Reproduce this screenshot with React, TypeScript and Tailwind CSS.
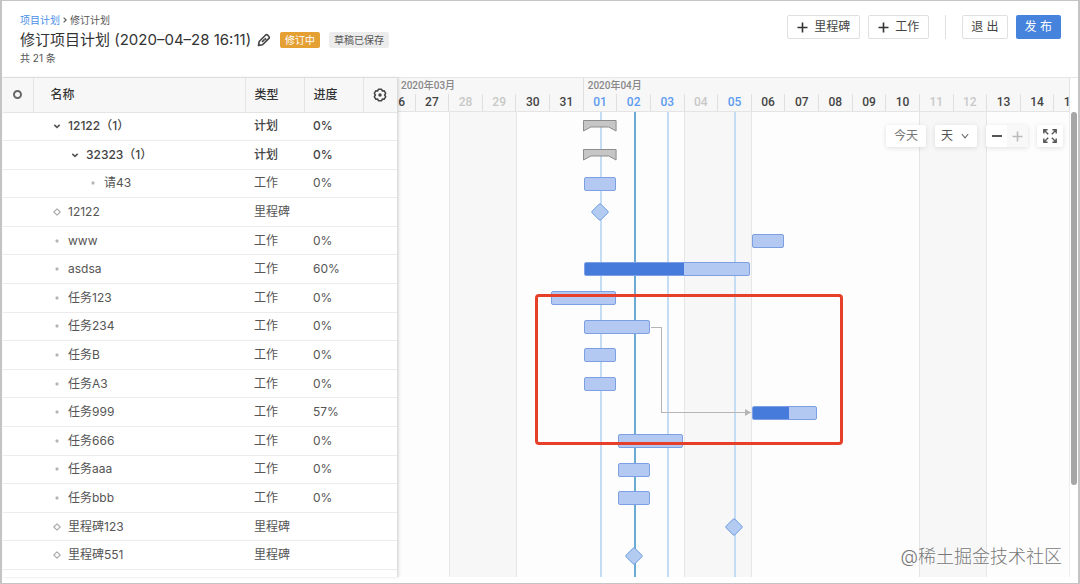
import React from 'react'

type TaskKind = 'plan' | 'work' | 'milestone'

interface Task {
  id: number
  name: string
  kind: TaskKind
  level: number
  progress?: number
  start?: number
  days?: number
}

interface Day {
  label: string
  tone: 'normal' | 'rest' | 'marked'
}

const KIND_LABEL: Record<TaskKind, string> = {
  plan: '计划',
  work: '工作',
  milestone: '里程碑',
}

// start is the zero-based day column, counted from 03-26
const TASKS: Task[] = [
  { id: 1, name: '12122（1）', kind: 'plan', level: 0, progress: 0, start: 6, days: 1 },
  { id: 2, name: '32323（1）', kind: 'plan', level: 1, progress: 0, start: 6, days: 1 },
  { id: 3, name: '请43', kind: 'work', level: 2, progress: 0, start: 6, days: 1 },
  { id: 4, name: '12122', kind: 'milestone', level: 0, start: 6, days: 1 },
  { id: 5, name: 'www', kind: 'work', level: 0, progress: 0, start: 11, days: 1 },
  { id: 6, name: 'asdsa', kind: 'work', level: 0, progress: 60, start: 6, days: 5 },
  { id: 7, name: '任务123', kind: 'work', level: 0, progress: 0, start: 5, days: 2 },
  { id: 8, name: '任务234', kind: 'work', level: 0, progress: 0, start: 6, days: 2 },
  { id: 9, name: '任务B', kind: 'work', level: 0, progress: 0, start: 6, days: 1 },
  { id: 10, name: '任务A3', kind: 'work', level: 0, progress: 0, start: 6, days: 1 },
  { id: 11, name: '任务999', kind: 'work', level: 0, progress: 57, start: 11, days: 2 },
  { id: 12, name: '任务666', kind: 'work', level: 0, progress: 0, start: 7, days: 2 },
  { id: 13, name: '任务aaa', kind: 'work', level: 0, progress: 0, start: 7, days: 1 },
  { id: 14, name: '任务bbb', kind: 'work', level: 0, progress: 0, start: 7, days: 1 },
  { id: 15, name: '里程碑123', kind: 'milestone', level: 0, start: 10, days: 1 },
  { id: 16, name: '里程碑551', kind: 'milestone', level: 0, start: 7, days: 1 },
]

const REST = ['28', '29', '04', '11', '12']
const MARKED = ['01', '02', '03', '05']

const DAYS: Day[] = [
  '26', '27', '28', '29', '30', '31',
  '01', '02', '03', '04', '05', '06', '07', '08', '09', '10', '11', '12', '13', '14', '15',
].map((label) => ({
  label,
  tone: REST.includes(label) ? 'rest' : MARKED.includes(label) ? 'marked' : 'normal',
}))

const TODAY = '02'

const DAY_TEXT: Record<Day['tone'], string> = {
  normal: 'text-[#444]',
  rest: 'text-[#c8c8c8]',
  marked: 'text-[#5b9bf0]',
}

const INDENT = ['pl-5', 'pl-[38px]', 'pl-[56px]']

function PencilIcon() {
  return (
    <svg className="size-[14px]" viewBox="0 0 14 14" fill="none" stroke="#444" strokeWidth="1.6" strokeLinejoin="round">
      <path d="M1.5 12.5l.7-4 6.2-6.2a1.7 1.7 0 0 1 2.4 0l.9.9a1.7 1.7 0 0 1 0 2.4l-6.2 6.2z" />
      <path d="M7.8 5.2l1.5 1.5M5 9l2.6-2.6" />
    </svg>
  )
}

function GearIcon() {
  return (
    <svg className="size-[14px]" viewBox="0 0 14 14" fill="none" stroke="#444" strokeWidth="1.5" strokeLinejoin="round">
      <path d="M5.4 1.2h3.2l.7 1.7 1.8-.2 1.6 2.7L11.6 7l1.1 1.6-1.6 2.7-1.8-.2-.7 1.7H5.4l-.7-1.7-1.8.2-1.6-2.7L2.4 7 1.3 5.4l1.6-2.7 1.8.2z" />
      <circle cx="7" cy="7" r="1.7" fill="#444" stroke="none" />
    </svg>
  )
}

function PlusIcon({ color }: { color: string }) {
  return (
    <svg className="size-[11px]" viewBox="0 0 11 11" stroke={color} strokeWidth="1.6">
      <path d="M5.5 0.5v10M0.5 5.5h10" />
    </svg>
  )
}

function ExpandIcon() {
  return (
    <svg className="size-[14px]" viewBox="0 0 14 14" fill="none" stroke="#555" strokeWidth="1.4">
      <path d="M.8 4.6V.8h3.8M.8.8l4.4 4.4M9.4.8h3.8v3.8M13.2.8L8.8 5.2M.8 9.4v3.8h3.8M.8 13.2l4.4-4.4M9.4 13.2h3.8V9.4M13.2 13.2L8.8 8.8" />
    </svg>
  )
}

function RowIcon({ kind }: { kind: TaskKind }) {
  if (kind === 'plan') {
    return (
      <svg className="size-2" viewBox="0 0 8 8" fill="none" stroke="#555" strokeWidth="1.6">
        <path d="M1.3 2.8L4 5.4l2.7-2.6" />
      </svg>
    )
  }
  if (kind === 'milestone') {
    return (
      <svg className="size-2" viewBox="0 0 8 8" fill="none" stroke="#aaa" strokeWidth="1.1" strokeLinejoin="round">
        <path d="M4 .8L7.2 4 4 7.2.8 4z" />
      </svg>
    )
  }
  return (
    <svg className="size-2" viewBox="0 0 8 8" fill="#b5b5b5">
      <rect x="2.6" y="2.6" width="2.8" height="2.8" rx=".6" />
    </svg>
  )
}

function PageHeader() {
  return (
    <header className="flex items-start justify-between border-b border-[#e6e6e6] pt-[11px] pr-[17px] pb-[13px] pl-[18px]">
      <div>
        <nav className="flex items-center gap-[3px] text-[10px] leading-4 text-[#555]">
          <a href="#plan" className="text-[#4a8fe8]">项目计划</a>
          <svg className="h-[6px] w-1" viewBox="0 0 4 6" fill="none" stroke="#555" strokeWidth="1.1">
            <path d="M.6.6L3.2 3 .6 5.4" />
          </svg>
          <span>修订计划</span>
        </nav>
        <div className="flex items-center text-[#333]">
          <h1 className="text-[15px] leading-6">修订项目计划 (2020–04–28 16:11)</h1>
          <button type="button" aria-label="编辑名称" className="ml-[6px]">
            <PencilIcon />
          </button>
          <span className="ml-[9px] rounded-xs bg-[#e5a033] px-[5px] text-[10px] leading-4 text-white">修订中</span>
          <span className="ml-[9px] rounded-xs bg-[#ececec] px-[5px] text-[10px] leading-4 text-[#555]">草稿已保存</span>
        </div>
        <p className="text-[10px] leading-3 text-[#555]">共 21 条</p>
      </div>
      <div className="flex items-center gap-2 pt-[3px] text-xs text-[#444]">
        <button type="button" className="flex h-6 items-center gap-[6px] rounded-xs border border-[#e0e0e0] px-[9px]">
          <PlusIcon color="#333" />
          里程碑
        </button>
        <button type="button" className="flex h-6 items-center gap-[6px] rounded-xs border border-[#e0e0e0] px-[9px]">
          <PlusIcon color="#333" />
          工作
        </button>
        <div className="mx-2 h-6 w-px bg-[#e0e0e0]" />
        <button type="button" className="h-6 rounded-xs border border-[#e0e0e0] px-2">退 出</button>
        <button type="button" className="h-6 rounded-xs bg-[#4583dc] px-[9px] text-white">发 布</button>
      </div>
    </header>
  )
}

function TaskTable() {
  return (
    <div className="relative z-10 w-[395px] shrink-0 overflow-hidden border-r border-[#dcdcdc] bg-white shadow-[1px_0_3px_rgba(0,0,0,0.12)]">
      <table className="h-[492px] w-full table-fixed border-collapse text-left text-xs text-[#555]">
        <colgroup>
          <col className="w-[30px]" />
          <col />
          <col className="w-[59px]" />
          <col className="w-[59px]" />
          <col className="w-[34px]" />
        </colgroup>
        <thead>
          <tr className="h-[34px] border-b border-[#e4e4e4] bg-[#f7f7f7] text-[#333]">
            <th className="border-r border-[#e4e4e4]">
              <input
                type="radio"
                aria-label="全选"
                className="mx-auto block size-[9px] appearance-none rounded-full border-2 border-[#666]"
              />
            </th>
            <th className="border-r border-[#e4e4e4] pl-[17px] font-medium">名称</th>
            <th className="border-r border-[#e4e4e4] pl-[9px] font-medium">类型</th>
            <th className="border-r border-[#e4e4e4] pl-[9px] font-medium">进度</th>
            <th>
              <button type="button" aria-label="列设置" className="mx-auto block">
                <GearIcon />
              </button>
            </th>
          </tr>
        </thead>
        <tbody>
          {TASKS.map((task) => (
            <tr
              key={task.id}
              className={`border-b border-[#ececec] ${task.kind === 'plan' ? 'font-medium text-[#444]' : ''}`}
            >
              <td />
              <td className={INDENT[task.level]}>
                <div className="flex items-center gap-[7px]">
                  <RowIcon kind={task.kind} />
                  <span>{task.name}</span>
                </div>
              </td>
              <td className="pl-[9px]">{KIND_LABEL[task.kind]}</td>
              <td className="pl-[9px]">{task.progress !== undefined && `${task.progress}%`}</td>
              <td />
            </tr>
          ))}
        </tbody>
      </table>
    </div>
  )
}

function ChartHeader() {
  return (
    <div className="h-[34px] overflow-hidden border-r border-b border-[#e4e4e4] bg-[#f7f7f7] font-[Roboto,'Noto_Sans_CJK_SC',sans-serif]">
      <div className="-mr-[18px] -ml-[17px] grid grid-cols-[repeat(21,minmax(0,1fr))]">
        <div className="col-span-6 h-4 pl-5 text-[10px] leading-4 font-medium text-[#888]">2020年03月</div>
        <div className="col-span-15 h-4 border-l border-[#e0e0e0] pl-1 text-[10px] leading-4 font-medium text-[#888]">
          2020年04月
        </div>
        {DAYS.map((day) => (
          <div
            key={day.label}
            className={`h-[18px] border-l border-[#e0e0e0] text-center text-xs leading-4 font-medium ${DAY_TEXT[day.tone]}`}
          >
            {day.label}
          </div>
        ))}
      </div>
    </div>
  )
}

function TaskBar({ task }: { task: Task }) {
  if (task.kind === 'plan') {
    return (
      <svg className="h-3 w-full" viewBox="0 0 34 12" preserveAspectRatio="none">
        <path d="M.5.5h33v10.5L26 7H8L.5 11z" fill="#c6c6c6" stroke="#8c8c8c" />
      </svg>
    )
  }
  if (task.kind === 'milestone') {
    return (
      <svg className="mx-auto size-[18px]" viewBox="0 0 18 18">
        <path
          d="M8.2 1.1a1.2 1.2 0 0 1 1.6 0l7.1 7.1a1.2 1.2 0 0 1 0 1.6l-7.1 7.1a1.2 1.2 0 0 1-1.6 0L1.1 9.8a1.2 1.2 0 0 1 0-1.6z"
          fill="#b3cbf0"
          stroke="#6c9de3"
        />
      </svg>
    )
  }
  return (
    <div className="mx-px h-[14px] overflow-hidden rounded-xs border border-[#7d9fe3] bg-[#b4c9f1]">
      <div className="h-full bg-[#477bdb]" style={{ width: `${task.progress ?? 0}%` }} />
    </div>
  )
}

// Finish-to-start link from 任务234 to 任务999
function DependencyLink() {
  const rows = TASKS.length
  const box = {
    left: `${(8 / DAYS.length) * 100}%`,
    width: `${(3 / DAYS.length) * 100}%`,
    top: `${(7.5 / rows) * 100}%`,
    height: `${(3 / rows) * 100}%`,
  }
  return (
    <div className="absolute flex" style={box}>
      <div className="w-[11px] border-t border-r border-[#b5b5b5]" />
      <div className="flex-1 border-b border-[#b5b5b5]" />
      <svg className="absolute right-0 -bottom-[3px] h-[7px] w-[6px]" viewBox="0 0 6 7" fill="#b5b5b5">
        <path d="M0 0l6 3.5L0 7z" />
      </svg>
    </div>
  )
}

function ChartToolbar() {
  const box = 'flex h-[22px] items-center rounded-xs bg-white shadow-[0_1px_5px_rgba(0,0,0,0.12)]'
  return (
    <div className="absolute top-[13px] right-[6px] flex gap-[9px] text-xs text-[#555]">
      <button type="button" className={`${box} px-2 text-[#777]`}>今天</button>
      <label className={`${box} relative`}>
        <select aria-label="时间刻度" className="h-full w-[42px] appearance-none bg-transparent pl-[6px] outline-none">
          <option>天</option>
          <option>周</option>
          <option>月</option>
        </select>
        <svg className="pointer-events-none absolute right-2 h-[6px] w-2" viewBox="0 0 8 6" fill="none" stroke="#666" strokeWidth="1.1">
          <path d="M.8 1L4 4.8 7.2 1" />
        </svg>
      </label>
      <div className={`${box} overflow-hidden`}>
        <button type="button" aria-label="缩小" className="flex h-full w-[21px] items-center justify-center">
          <svg className="h-[2px] w-[10px]" viewBox="0 0 10 2" fill="#555">
            <rect width="10" height="2" />
          </svg>
        </button>
        <button type="button" aria-label="放大" className="flex h-full w-[21px] items-center justify-center bg-[#f8f8f8]">
          <PlusIcon color="#bbb" />
        </button>
      </div>
      <button type="button" aria-label="全屏" className={`${box} w-[26px] justify-center`}>
        <ExpandIcon />
      </button>
    </div>
  )
}

function GanttChart() {
  return (
    <div className="flex min-w-0 flex-1 flex-col">
      <ChartHeader />
      <div className="relative flex-1 overflow-hidden border-r border-[#ececec] bg-[#fdfdfd]">
        <div className="relative -mr-[18px] -ml-4 h-full">
          <div className="absolute inset-0 grid grid-cols-[repeat(21,minmax(0,1fr))]">
            {DAYS.map((day, i) => {
              const rest = day.tone === 'rest'
              const edge = rest !== (DAYS[i - 1]?.tone === 'rest') && day.label !== '26'
              const weekend = rest || day.label === '05'
              return (
                <div
                  key={day.label}
                  className={`relative ${weekend ? 'bg-[#f7f7f7]' : ''} ${
                    (edge && day.label !== '05') || day.label === '06' ? 'border-l border-[#e6e6e6]' : ''
                  }`}
                >
                  {day.tone === 'marked' && (
                    <div
                      className={`absolute inset-y-0 left-1/2 w-[2px] ${
                        day.label === TODAY ? 'bg-[#6babd3]' : 'bg-[#c5dcf5]'
                      }`}
                    />
                  )}
                </div>
              )
            })}
          </div>
          <div className="relative flex h-[458px] flex-col">
            {TASKS.map((task) => (
              <div key={task.id} className="grid flex-1 grid-cols-[repeat(21,minmax(0,1fr))] items-center">
                <div style={{ gridColumn: `${(task.start ?? 0) + 1} / span ${task.days ?? 1}` }}>
                  <TaskBar task={task} />
                </div>
              </div>
            ))}
            <DependencyLink />
          </div>
          <div className="absolute top-[182px] left-[153px] h-[151px] w-[308px] rounded-sm border-3 border-[#e6402b]" />
        </div>
        <ChartToolbar />
        <div className="absolute right-[7px] bottom-[6px] text-lg leading-7 font-light text-[#777] [text-shadow:0_0_2px_#fff]">
          @稀土掘金技术社区
        </div>
      </div>
    </div>
  )
}

export default function App() {
  return (
    <div className="flex h-screen min-h-[400px] flex-col border-t border-r-2 border-b border-l-2 border-[#c4c4c4] bg-white pb-[6px] font-[Inter,'Noto_Sans_CJK_SC',sans-serif]">
      <PageHeader />
      <main className="flex min-h-0 flex-1 pl-px">
        <TaskTable />
        <GanttChart />
        <div className="w-2 pt-[34px]">
          <div className="mx-px h-[373px] rounded-full bg-[#a6a6a6]" />
        </div>
      </main>
    </div>
  )
}
